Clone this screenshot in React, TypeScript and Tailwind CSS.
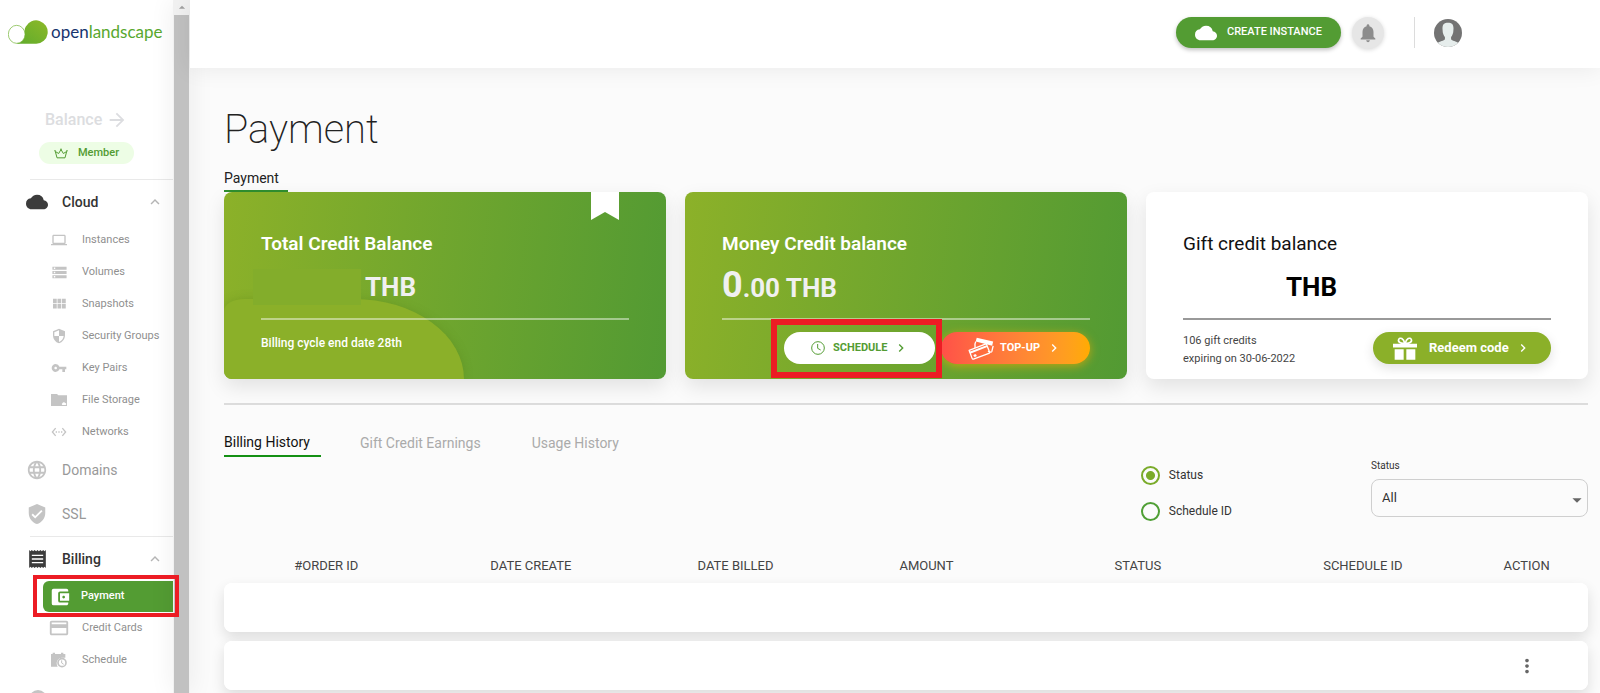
import React from 'react'
import {
  MdAccountBalanceWallet,
  MdArrowDropDown,
  MdArrowDropUp,
  MdArrowForward,
  MdCloud,
  MdCreditCard,
  MdKeyboardArrowRight,
  MdKeyboardArrowUp,
  MdLanguage,
  MdLaptop,
  MdMoreVert,
  MdNotifications,
  MdSecurity,
  MdSettingsEthernet,
  MdStorage,
  MdVerifiedUser,
  MdVpnKey,
} from 'react-icons/md'

type IconProps = { className?: string }

const LogoMark = ({ className }: IconProps) => (
  <svg viewBox="0 0 120 72" className={className} aria-hidden="true">
    <defs>
      <linearGradient id="logo" x1="0" y1="1" x2="1" y2="0">
        <stop offset="0" stopColor="#5fab2c" />
        <stop offset="1" stopColor="#8db928" />
      </linearGradient>
    </defs>
    <path
      d="M25 71h60a35 35 0 1 0-32-51Q49 27 50 36Q54 62 25 71z"
      fill="url(#logo)"
    />
    <ellipse cx="26" cy="43" rx="25" ry="27" fill="#fff" stroke="#6db12c" strokeWidth="2" />
  </svg>
)

const CrownIcon = ({ className }: IconProps) => (
  <svg viewBox="0 0 42 32" className={className} fill="none" stroke="currentColor" strokeWidth="3" strokeLinejoin="round" aria-hidden="true">
    <path d="M9 29 4 10l10 6 7-12 7 12 10-6-5 19z" />
    <circle cx="3" cy="8" r="1" />
    <circle cx="39" cy="8" r="1" />
    <circle cx="21" cy="3" r="1" />
  </svg>
)

const VolumesIcon = ({ className }: IconProps) => (
  <svg viewBox="0 0 24 24" className={className} fill="currentColor" aria-hidden="true">
    <path d="M2 20h20v-4H2v4zm2-3h2v2H4v-2zM2 4v4h20V4H2zm4 3H4V5h2v2zm-4 7h20v-4H2v4zm2-3h2v2H4v-2z" />
  </svg>
)

const SnapshotIcon = ({ className }: IconProps) => (
  <svg viewBox="0 0 24 24" className={className} fill="currentColor" aria-hidden="true">
    <path d="M4 11h5V5H4v6zm0 7h5v-6H4v6zm6 0h5v-6h-5v6zm6 0h5v-6h-5v6zm-6-7h5V5h-5v6zm6-6v6h5V5h-5z" />
  </svg>
)

const FileStorageIcon = ({ className }: IconProps) => (
  <svg viewBox="0 0 24 24" className={className} fill="currentColor" aria-hidden="true">
    <path d="M0 3h9l2 2h13v16H0z" />
    <path d="M17 19.500h5a1.600 1.600 0 0 0-.6-3 2.300 2.300 0 0 0-4.200.3 1.500 1.500 0 0 0-.2 2.700z" fill="#fff" />
  </svg>
)

const ReceiptIcon = ({ className }: IconProps) => (
  <svg viewBox="0 0 50 54" className={className} aria-hidden="true">
    <path
      d="M0 0l4 4 4-4 4 4 4-4 5 4 4-4 4 4 5-4 4 4 4-4 4 4 4-4v54l-4-4-4 4-4-4-4 4-5-4-4 4-4-4-5 4-4-4-4 4-4-4-4 4z"
      fill="currentColor"
    />
    <path d="M8 16h34M8 27h34M8 38h34" stroke="#fff" strokeWidth="4" />
  </svg>
)

const ScheduleIcon = ({ className }: IconProps) => (
  <svg viewBox="0 0 48 46" className={className} aria-hidden="true">
    <path d="M0 5h5V1h7v4h18V1h7v4h6v11H32Q18 18 17 32q0 6 3 11H0z" fill="currentColor" />
    <circle cx="33" cy="31" r="12" fill="none" stroke="currentColor" strokeWidth="5" />
    <path d="M32 24v8l6 4" fill="none" stroke="currentColor" strokeWidth="3" />
  </svg>
)

const ClockIcon = ({ className }: IconProps) => (
  <svg viewBox="0 0 42 42" className={className} fill="none" stroke="currentColor" strokeWidth="3" aria-hidden="true">
    <circle cx="21" cy="21" r="19" />
    <path d="M20 9v13l9 5" />
  </svg>
)

const CardsIcon = ({ className }: IconProps) => (
  <svg viewBox="0 0 78 70" className={className} fill="none" stroke="#fff" strokeWidth="4" strokeLinejoin="round" aria-hidden="true">
    <path d="M26 2 76 14l-3 13L23 14z" fill="#fff" stroke="none" />
    <path d="m60 44 9 2q2 0 3-2l4-17" />
    <path d="m3 41 49-19q3-1 4 1l9 23q1 3-2 4L16 67q-3 1-4-2z" />
    <path d="m5 48 52-20" strokeWidth="6" />
    <path d="m17 55 6-2 2 5-6 2z" fill="#fff" strokeWidth="2" />
    <path d="M23 14q-4 6-2 19" />
  </svg>
)

const GiftIcon = ({ className }: IconProps) => (
  <svg viewBox="0 0 72 68" className={className} aria-hidden="true">
    <path d="M0 20h72v11H0zM5 36h27v32H5zM40 36h27v32H40z" fill="#fff" />
    <path
      d="M35 18C24 20 14 14 17 7c4-8 15-3 18 11zM37 18c11 2 21-4 18-11C51-1 40 4 37 18z"
      fill="none"
      stroke="#fff"
      strokeWidth="5"
    />
  </svg>
)

const Avatar = ({ className }: IconProps) => (
  <svg viewBox="0 0 82 82" className={className} aria-hidden="true">
    <clipPath id="avatar">
      <circle cx="41" cy="41" r="41" />
    </clipPath>
    <g clipPath="url(#avatar)">
      <path d="M0 0h82v82H0z" fill="#737373" />
      <path
        d="M41 11c12 0 17 6 16 19 0 13-4 19-7 23v6c2 5 16 5 22 12v20H10V71c6-7 20-7 22-12v-6c-3-4-7-10-7-23-1-13 4-19 16-19z"
        fill="#e6edec"
      />
    </g>
  </svg>
)

const cloudItems = [
  { label: 'Instances', icon: <MdLaptop className="size-4" /> },
  { label: 'Volumes', icon: <VolumesIcon className="size-[17px]" /> },
  { label: 'Snapshots', icon: <SnapshotIcon className="size-[18px]" /> },
  { label: 'Security Groups', icon: <MdSecurity className="size-4" /> },
  { label: 'Key Pairs', icon: <MdVpnKey className="size-4" /> },
  { label: 'File Storage', icon: <FileStorageIcon className="size-4" /> },
  { label: 'Networks', icon: <MdSettingsEthernet className="size-4" /> },
]

const billingItems = [
  { label: 'Credit Cards', icon: <MdCreditCard className="size-[22px]" /> },
  { label: 'Schedule', icon: <ScheduleIcon className="size-4" /> },
]

const columns = [
  { label: '#ORDER ID', width: 'w-[15%]' },
  { label: 'DATE CREATE', width: 'w-[15%]' },
  { label: 'DATE BILLED', width: 'w-[15%]' },
  { label: 'AMOUNT', width: 'w-[13%]' },
  { label: 'STATUS', width: 'w-[18%]' },
  { label: 'SCHEDULE ID', width: 'w-[15%]' },
  { label: 'ACTION', width: 'w-[9%]' },
]

const SubItem = ({ label, icon }: { label: string; icon: React.ReactNode }) => (
  <a href="#" className="flex h-8 items-center text-[11px] text-[#8f8f8f]">
    <span className="ml-12 flex w-[22px] justify-center text-[#c4c4c4]">{icon}</span>
    <span className="ml-3 whitespace-nowrap">{label}</span>
  </a>
)

const GroupHeader = ({ label, icon }: { label: string; icon: React.ReactNode }) => (
  <button type="button" className="flex w-full items-center text-sm font-medium text-[#333]">
    <span className="ml-[26px] flex w-[22px] justify-center text-[#3c3c3c]">{icon}</span>
    <span className="ml-[14px]">{label}</span>
    <MdKeyboardArrowUp className="mr-[9px] ml-auto size-[18px] text-[#b5b5b5]" />
  </button>
)

const Sidebar = () => (
  <aside className="flex h-full w-[173px] shrink-0 flex-col overflow-hidden bg-white">
    <a href="#" className="flex h-16 shrink-0 items-center pl-2">
      <LogoMark className="h-6 w-10" />
      <span className="ml-[3px] font-[Lato] text-[17px] leading-6 text-[#17346e]">
        open<span className="text-[#58a82e]">landscape</span>
      </span>
    </a>
    <a href="#" className="mt-11 ml-[45px] flex h-6 shrink-0 items-center text-base font-medium text-[#dcdde0]">
      Balance
      <MdArrowForward className="ml-1 size-[22px]" />
    </a>
    <div className="mt-[10px] ml-[39px] flex h-[22px] w-[95px] shrink-0 items-center rounded-full bg-[#edfde5] text-[11px] font-medium text-[#539c33]">
      <CrownIcon className="ml-[15px] h-[11px] w-[14px]" />
      <span className="ml-[10px]">Member</span>
    </div>
    <nav className="mt-[15px] flex flex-col">
      <hr className="ml-[30px] border-[#e9e9e9]" />
      <div className="flex h-11">
        <GroupHeader label="Cloud" icon={<MdCloud className="size-[22px]" />} />
      </div>
      {cloudItems.map((item) => (
        <SubItem key={item.label} {...item} />
      ))}
      <a href="#" className="flex h-11 items-center text-sm text-[#999]">
        <MdLanguage className="ml-[26px] size-[22px] text-[#c4c4c4]" />
        <span className="ml-[14px]">Domains</span>
      </a>
      <a href="#" className="flex h-11 items-center text-sm text-[#999]">
        <MdVerifiedUser className="ml-[26px] size-[22px] text-[#c4c4c4]" />
        <span className="ml-[14px]">SSL</span>
      </a>
      <hr className="ml-[30px] border-[#e9e9e9]" />
      <div className="flex h-11">
        <GroupHeader label="Billing" icon={<ReceiptIcon className="h-[18px] w-[17px]" />} />
      </div>
      <a href="#" aria-current="page" className="ml-[43px] flex h-[31px] items-center rounded-l-md bg-[#539c33] text-[11px] font-medium text-white">
        <MdAccountBalanceWallet className="ml-[6px] size-[22px]" />
        <span className="ml-[10px]">Payment</span>
      </a>
      {billingItems.map((item) => (
        <SubItem key={item.label} {...item} />
      ))}
      <a href="#" aria-label="Support" className="mt-[14px] ml-[29px] size-[18px] rounded-full bg-[#c4c4c4]" />
    </nav>
  </aside>
)

const Scrollbar = () => (
  <div className="flex h-full w-[17px] shrink-0 flex-col items-center bg-[#f1f1f1] shadow-[0_0_25px_rgba(0,0,0,0.08)]">
    <MdArrowDropUp className="h-[15px] w-4 shrink-0 text-[#a0a0a0]" />
    <div className="w-[15px] grow bg-[#c1c1c1]" />
  </div>
)

const Header = () => (
  <header className="relative flex h-[68px] shrink-0 items-center justify-end bg-white pr-[138px] pb-[3px] shadow-[0_0_25px_rgba(0,0,0,0.08)]">
    <button type="button" className="flex h-[31px] w-[165px] items-center rounded-full bg-[#539c33] text-[11px] font-medium text-white shadow-[0_2px_4px_rgba(0,0,0,0.25)]">
      <MdCloud className="ml-[19px] size-[22px]" />
      <span className="ml-[10px]">CREATE INSTANCE</span>
    </button>
    <button type="button" aria-label="Notifications" className="ml-[11px] flex size-8 items-center justify-center rounded-full bg-[#e6e6e6] text-[#8c8c8c] shadow-[0_1px_4px_rgba(0,0,0,0.15)]">
      <MdNotifications className="size-[22px]" />
    </button>
    <div className="ml-[30px] h-[31px] w-px bg-[#dcdcdc]" />
    <button type="button" aria-label="Account" className="ml-[19px]">
      <Avatar className="size-7" />
    </button>
  </header>
)

const TotalCredit = () => (
  <section className="relative h-[187px] rounded-lg bg-[linear-gradient(97deg,#8cb129,#529a33)] px-[37px] pt-9 text-white shadow-[0_8px_20px_rgba(0,0,0,0.1)]">
    <div className="absolute inset-0 overflow-hidden rounded-lg">
      <div className="absolute bottom-0 left-0 h-20 w-60 rounded-[20px_110px_0_0/12px_80px_0_0] bg-[#8bb029] shadow-[0_0_10px_rgba(80,120,20,0.3)]" />
    </div>
    <svg viewBox="0 0 28 28" className="absolute top-0 right-[47px] size-7" aria-hidden="true">
      <path d="M0 0h28v28l-14-8-14 8z" fill="#fff" />
    </svg>
    <div className="relative">
      <h2 className="text-[19px] leading-8 font-semibold">Total Credit Balance</h2>
      <p className="flex h-[54px] items-center text-[26px] font-bold text-[#f0f0f0]">
        <span className="-ml-2 h-9 w-[108px] bg-[#83ad2b]" />
        <span className="ml-1">THB</span>
      </p>
      <hr className="mt-1 border-t-2 border-white/45" />
      <p className="mt-[13px] text-[12px] leading-5 font-medium">Billing cycle end date 28th</p>
    </div>
  </section>
)

const MoneyCredit = () => (
  <section className="h-[187px] rounded-lg bg-[linear-gradient(97deg,#8cb129,#529a33)] px-[37px] pt-9 text-white shadow-[0_8px_20px_rgba(0,0,0,0.1)]">
    <h2 className="text-[19px] leading-8 font-semibold">Money Credit balance</h2>
    <p className="h-[54px] text-[26px] leading-[50px] font-bold text-[#f0f0f0]">
      <span className="text-[36px]">0</span>.00 THB
    </p>
    <hr className="mt-1 border-t-2 border-white/45" />
    <div className="mt-3 flex justify-end gap-[6px]">
      <div className="relative">
        <button type="button" className="flex h-8 w-[151px] items-center rounded-full bg-white pl-[27px] text-[11px] font-bold text-[#539c33]">
          <ClockIcon className="size-[14px]" />
          <span className="ml-2">SCHEDULE</span>
          <MdKeyboardArrowRight className="ml-[6px] size-4" />
        </button>
        <div className="pointer-events-none absolute -top-[13px] -right-[7px] -bottom-[14px] -left-[13px] z-10 border-6 border-[#ec1c24]" />
      </div>
      <button type="button" className="flex h-8 w-[149px] items-center rounded-full bg-linear-to-r from-[#ff5048] to-[#ffab00] pl-[27px] text-[11px] font-bold text-white shadow-[0_2px_10px_rgba(255,171,0,0.6)]">
        <CardsIcon className="h-[23px] w-[26px]" />
        <span className="ml-[6px]">TOP-UP</span>
        <MdKeyboardArrowRight className="ml-[6px] size-4" />
      </button>
    </div>
  </section>
)

const GiftCredit = () => (
  <section className="h-[187px] rounded-lg bg-white px-[37px] pt-9 text-black shadow-[0_8px_20px_rgba(0,0,0,0.1)]">
    <h2 className="text-[19px] leading-8 text-[#111]">Gift credit balance</h2>
    <p className="flex h-[54px] items-center pl-[103px] text-[26px] font-bold">THB</p>
    <hr className="mt-1 border-t-2 border-[#999]" />
    <div className="mt-3 flex items-start justify-between">
      <p className="text-[11px] leading-[18px] text-[#444]">
        106 gift credits
        <br />
        expiring on 30-06-2022
      </p>
      <button type="button" className="flex h-8 w-[178px] items-center rounded-full bg-[#8bb029] pl-5 text-[13px] font-bold text-white shadow-[0_4px_12px_rgba(0,0,0,0.12)]">
        <GiftIcon className="h-[23px] w-6" />
        <span className="ml-3">Redeem code</span>
        <MdKeyboardArrowRight className="ml-[6px] size-4" />
      </button>
    </div>
  </section>
)

const Filters = () => (
  <form className="flex justify-end">
    <fieldset className="mr-[139px] flex flex-col">
      <label className="flex h-9 items-center text-[12px] text-[#333]">
        <input type="radio" name="filter" defaultChecked className="mr-[9px] size-[19px] appearance-none rounded-full border-2 border-[#7aab2a] bg-[radial-gradient(circle,#7aab2a_4px,transparent_5px)]" />
        Status
      </label>
      <label className="flex h-9 items-center text-[12px] text-[#333]">
        <input type="radio" name="filter" className="mr-[9px] size-[19px] appearance-none rounded-full border-2 border-[#4f9f35]" />
        Schedule ID
      </label>
    </fieldset>
    <div className="flex w-[217px] flex-col">
      <label htmlFor="status" className="text-[10px] leading-[18px] text-[#333]">
        Status
      </label>
      <div className="relative mt-1">
        <select id="status" className="h-[38px] w-full appearance-none rounded-lg border border-[#cfcfcf] bg-transparent px-[10px] text-[13px] text-[#333]">
          <option>All</option>
        </select>
        <MdArrowDropDown className="pointer-events-none absolute top-[10px] right-0 size-[22px] text-[#666]" />
      </div>
    </div>
  </form>
)

const HistoryTable = () => (
  <table className="mt-5 w-full table-fixed border-separate border-spacing-x-0 border-spacing-y-[9px]">
    <thead>
      <tr className="h-4">
        {columns.map((column) => (
          <th key={column.label} scope="col" className={`${column.width} p-0 text-[13px] leading-4 font-normal text-[#444]`}>
            {column.label}
          </th>
        ))}
      </tr>
    </thead>
    <tbody>
      {[false, true, false].map((hasMenu, row) => (
        <tr key={row} className="h-[49px] rounded-lg bg-white shadow-[0_6px_14px_rgba(0,0,0,0.12)]">
          <td colSpan={6} className="rounded-l-lg bg-white" />
          <td className="rounded-r-lg bg-white text-center">
            {hasMenu && (
              <button type="button" aria-label="Row actions" className="align-middle text-[#666]">
                <MdMoreVert className="size-[22px]" />
              </button>
            )}
          </td>
        </tr>
      ))}
    </tbody>
  </table>
)

const App = () => (
  <div className="relative flex h-screen overflow-hidden bg-[#fbfbfb] font-[Roboto,sans-serif]">
    <Sidebar />
    <Scrollbar />
    <div className="pointer-events-none absolute top-[575px] left-[33px] z-10 h-[42px] w-[146px] border-4 border-[#ec1c24]" />
    <div className="flex min-w-0 grow flex-col">
      <Header />
      <main className="pr-3 pl-[34px]">
        <h1 className="mt-9 text-[40px] leading-[52px] font-extralight text-[#222]">Payment</h1>
        <div className="mt-[9px] flex">
          <a href="#" className="flex h-[27px] w-16 items-center border-b-2 border-[#2f8f2f] text-sm text-[#222]">
            Payment
          </a>
        </div>
        <div className="grid grid-cols-3 gap-[19px]">
          <TotalCredit />
          <MoneyCredit />
          <GiftCredit />
        </div>
        <hr className="mt-6 border-t-2 border-[#dcdcdc]" />
        <div className="mt-6 flex text-sm text-[#aaa]">
          <button type="button" className="h-7 w-[97px] border-b-2 border-[#149014] text-left text-[#111]">
            Billing History
          </button>
          <button type="button" className="ml-[39px] h-7">Gift Credit Earnings</button>
          <button type="button" className="ml-[51px] h-7">Usage History</button>
        </div>
        <Filters />
        <HistoryTable />
      </main>
    </div>
  </div>
)

export default App
